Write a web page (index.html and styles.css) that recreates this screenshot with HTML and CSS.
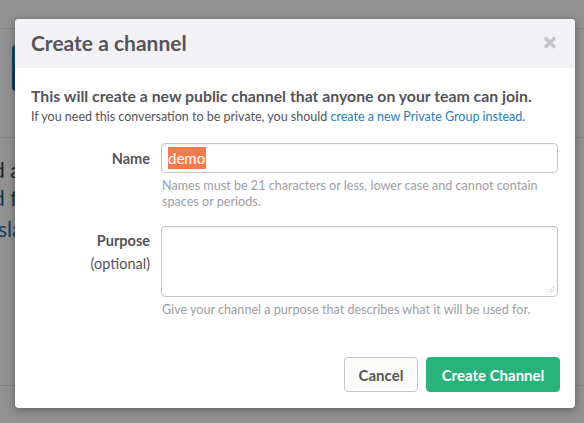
FILE: index.html
```html
<!DOCTYPE html>
<html>
<head>
<meta charset="utf-8">
<link rel="stylesheet" href="styles.css">
</head>
<body>
<div class="page">
  <div class="bg">
    <div class="bg-top"></div>
    <div class="bg-head"><div class="bg-logo"></div></div>
    <div class="bg-text">
      <div class="l1">d a</div>
      <div class="l2">d f</div>
      <div class="l3">sla</div>
    </div>
    <div class="bg-foot"></div>
  </div>
  <div class="overlay"></div>
  <div class="modal">
    <div class="modal-header">
      <h1 class="title">Create a channel</h1>
      <svg class="close" width="14" height="13" viewBox="0 0 14 13"><path d="M2 1.5 L12 11.5 M12 1.5 L2 11.5" stroke="#c3c3c8" stroke-width="3.4" stroke-linecap="butt"/></svg>
    </div>
    <div class="modal-body">
      <p class="lead">This will create a new public channel that anyone on your team can join.</p>
      <p class="sub">If you need this conversation to be private, you should <a class="link">create a new Private Group instead</a>.</p>
      <div class="form">
        <div class="label"><b>Name</b></div>
        <div class="field">
          <div class="input"><span class="sel">demo</span></div>
          <div class="hint hint-name">Names must be 21 characters or less, lower case and cannot contain spaces or periods.</div>
        </div>
        <div class="label label2"><b>Purpose</b><span>(optional)</span></div>
        <div class="field">
          <div class="textarea">
            <svg class="grip" width="7" height="7" viewBox="0 0 7 7"><g fill="#b9b9b9"><rect x="5" y="0" width="1" height="1"/><rect x="3" y="2" width="1" height="1"/><rect x="5" y="2" width="1" height="1"/><rect x="1" y="4" width="1" height="1"/><rect x="3" y="4" width="1" height="1"/><rect x="5" y="4" width="1" height="1"/></g></svg>
          </div>
          <div class="hint">Give your channel a purpose that describes what it will be used for.</div>
        </div>
      </div>
    </div>
    <div class="modal-footer">
      <button class="btn cancel">Cancel</button>
      <button class="btn primary">Create Channel</button>
    </div>
  </div>
</div>
</body>
</html>
```

FILE: styles.css
```css
html, body {
  margin: 0;
  padding: 0;
}
body {
  width: 584px;
  height: 423px;
  overflow: hidden;
  font-family: Lato, "Open Sans", sans-serif;
}
.page {
  position: relative;
  width: 584px;
  height: 423px;
  background: #fff;
}
.bg {
  display: flex;
  flex-direction: column;
  height: 423px;
}
.bg-top {
  height: 28px;
  border-bottom: 1px solid #ececec;
}
.bg-head {
  height: 109px;
  border-bottom: 1px solid #e6e6e6;
  padding: 16px 0 0 12px;
  box-sizing: border-box;
}
.bg-logo {
  width: 40px;
  height: 46px;
  border-radius: 4px;
  background: linear-gradient(#1b8fb0, #1a5ca8);
}
.bg-text {
  height: 247px;
  padding: 18px 0 0 0;
  box-sizing: border-box;
  font-size: 21px;
  line-height: 28px;
}
.bg-text .l1 { color: #3d3c40; margin-left: -7px; }
.bg-text .l2 { color: #1f5f8e; margin-left: -7px; }
.bg-text .l3 { color: #1f6fa6; padding-top: 3px; margin-left: -2px; }
.bg-foot {
  border-top: 1px solid #e2e2e2;
  flex: 1;
}
.overlay {
  position: absolute;
  inset: 0;
  background: rgba(0, 0, 0, 0.43);
}
.modal {
  position: absolute;
  left: 15px;
  top: 19px;
  width: 560px;
  height: 389px;
  background: #fff;
  border-radius: 4px;
  box-shadow: 0 2px 8px rgba(0, 0, 0, 0.35);
  display: flex;
  flex-direction: column;
  overflow: hidden;
}
.modal-header {
  height: 49px;
  flex: none;
  background: #f2f2f5;
  display: flex;
  align-items: center;
  justify-content: space-between;
  padding: 0 18px 0 16px;
  box-sizing: border-box;
}
.title {
  margin: 0;
  font-size: 21px;
  font-weight: 700;
  color: #555459;
  line-height: 26px;
  padding-bottom: 1px;
}
.close {
  display: block;
  margin-top: -2px;
}
.modal-body {
  padding: 18px 17px 0 16px;
  flex: 1;
}
.lead {
  margin: 0;
  font-size: 15.8px;
  font-weight: 700;
  color: #555459;
  line-height: 20px;
}
.sub {
  margin: 2px 0 0;
  font-size: 12.5px;
  color: #555459;
  line-height: 17px;
}
.link {
  color: #2a80b9;
}
.form {
  margin-top: 18px;
  display: grid;
  grid-template-columns: 119px 1fr;
  column-gap: 11px;
  row-gap: 16px;
}
.label {
  text-align: right;
  font-size: 14.5px;
  color: #555459;
  padding-top: 7px;
  line-height: 18px;
}
.label2 {
  display: flex;
  flex-direction: column;
  align-items: flex-end;
  padding-top: 6px;
  gap: 5px;
}
.label2 span {
  font-size: 14.5px;
}
.input {
  height: 30px;
  border: 1px solid #c5c5c5;
  border-radius: 4px;
  box-sizing: border-box;
  padding: 3px 6px 0;
  font-size: 15px;
  line-height: 22px;
  box-shadow: inset 0 1px 1px rgba(0,0,0,0.06);
}
.sel {
  background: #ef7c4c;
  color: #fff;
  display: inline-block;
  line-height: 22px;
  padding-right: 1px;
}
.hint {
  font-size: 12.6px;
  color: #9e9ea6;
  line-height: 16px;
  margin-top: 5px;
  padding-left: 1px;
}
.hint-name {
  max-width: 382px;
}
.textarea {
  height: 71px;
  border: 1px solid #c5c5c5;
  border-radius: 4px;
  box-sizing: border-box;
  position: relative;
  box-shadow: inset 0 1px 1px rgba(0,0,0,0.06);
}
.grip {
  position: absolute;
  right: 2px;
  bottom: 2px;
}
.modal-footer {
  display: flex;
  justify-content: flex-end;
  gap: 8px;
  padding: 0 15px 16px;
}
.btn {
  height: 35px;
  border-radius: 4px;
  font-family: Lato, sans-serif;
  font-size: 15px;
  font-weight: 700;
  padding: 0;
  box-sizing: border-box;
}
.cancel {
  background: #fbfbfa;
  border: 1px solid #c5c5c5;
  color: #555459;
  width: 74px;
}
.primary {
  background: #2ab27b;
  border: 1px solid #2ab27b;
  color: #fff;
  width: 134px;
}
```
